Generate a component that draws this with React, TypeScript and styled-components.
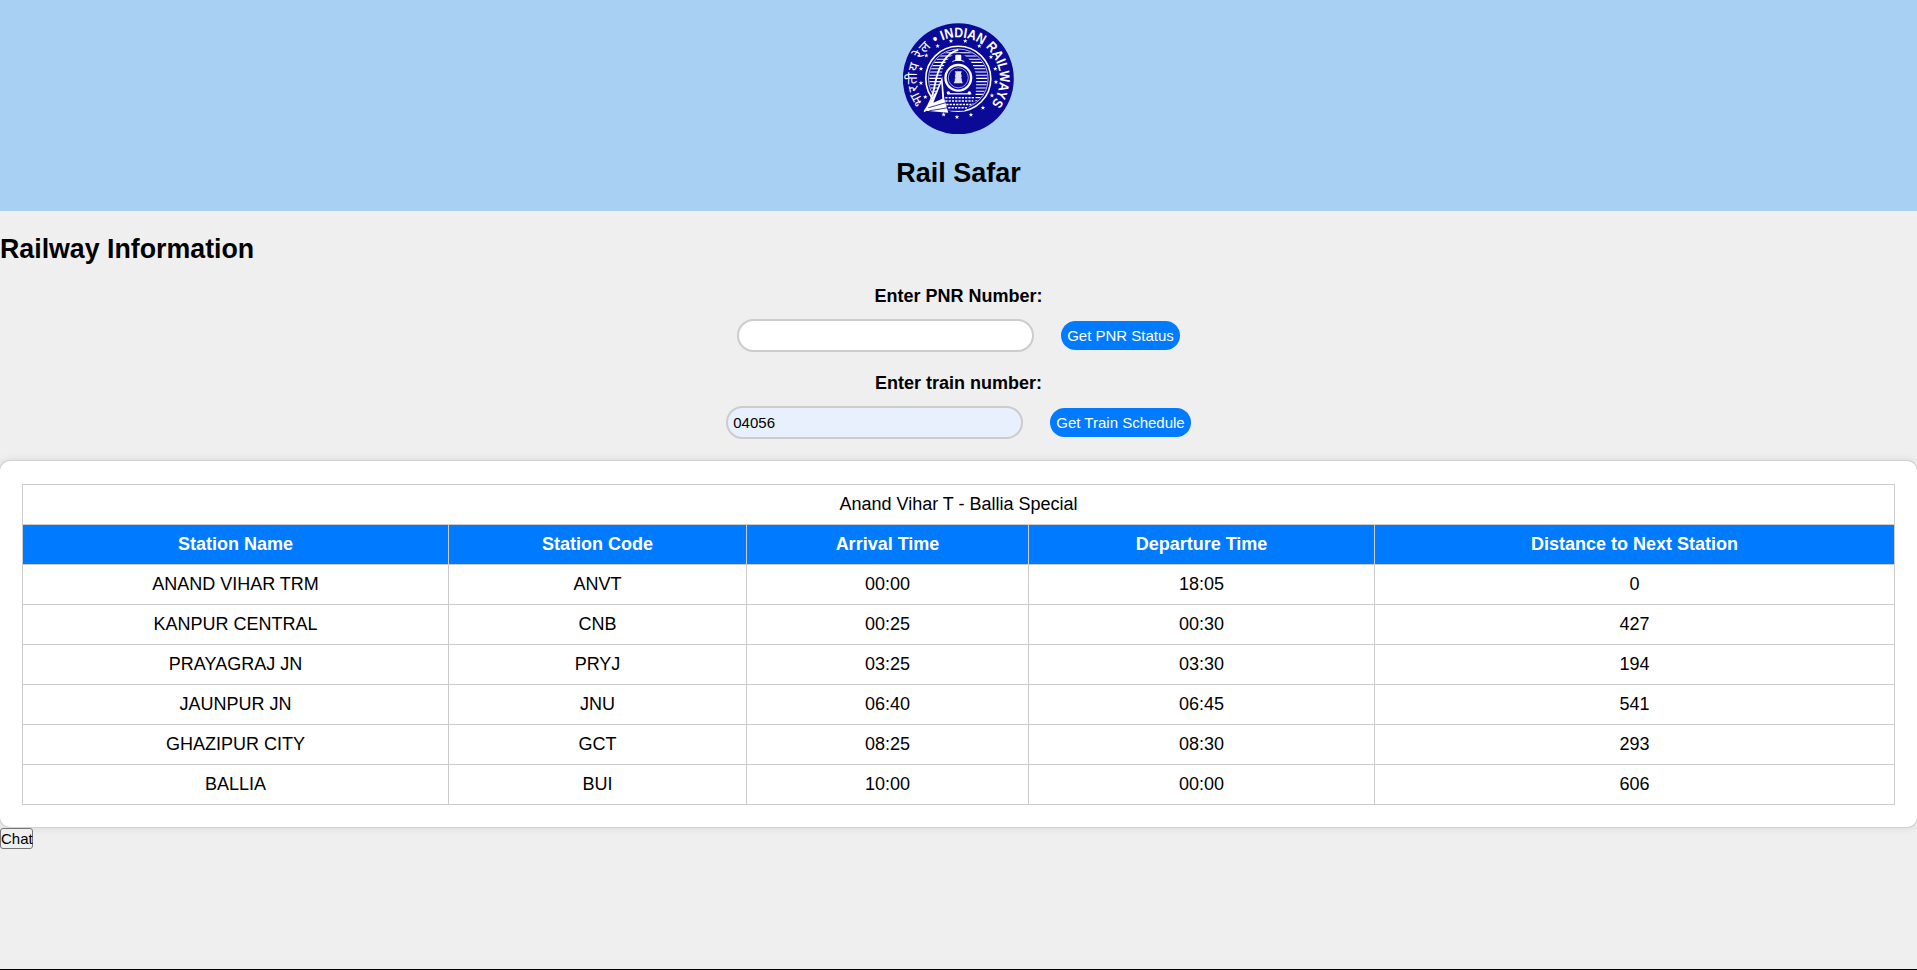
import React, { FC } from "react";
import styled, { createGlobalStyle } from "styled-components";

const GlobalStyle = createGlobalStyle`
  html, body {
    margin: 0;
    padding: 0;
    background: #efefef;
    font-family: "Liberation Sans", Arial, sans-serif;
    color: #000;
  }
`;

const Page = styled.div`
  display: flex;
  flex-direction: column;
  height: 970px;
  overflow: hidden;
`;

const Header = styled.header`
  display: flex;
  flex-direction: column;
  align-items: center;
  height: 211px;
  padding-top: 22px;
  box-sizing: border-box;
  background: #a8d0f2;
`;

const Title = styled.h1`
  margin: 24px 0 0;
  font-size: 27px;
  line-height: 31px;
  font-weight: 700;
`;

const Heading = styled.h2`
  margin: 22px 0 0;
  font-size: 26.75px;
  line-height: 32px;
  font-weight: 700;
`;

const Form = styled.section`
  display: flex;
  flex-direction: column;
  align-items: center;
  margin-top: 21px;
`;

const Label = styled.label`
  font-size: 18px;
  line-height: 21px;
  font-weight: 700;
  margin-bottom: 12px;
`;

const FormRow = styled.div`
  display: flex;
  align-items: center;
  gap: 27px;
  margin-bottom: 21px;
`;

const Input = styled.input<{ $filled?: boolean }>`
  width: 297px;
  height: 33px;
  box-sizing: border-box;
  padding: 0 5px;
  border: 2px solid #ccc;
  border-radius: 20px;
  outline: none;
  background: ${(p) => (p.$filled ? "#e8f0fe" : "#fff")};
  font-family: inherit;
  font-size: 15px;
  color: #000;
`;

const Button = styled.button`
  height: 29px;
  padding: 0 6px;
  border: none;
  border-radius: 15px;
  background: #007bff;
  color: #fff;
  font-family: inherit;
  font-size: 15px;
`;

const Card = styled.section`
  margin-top: 1px;
  padding: 23px 23px 22px 22px;
  background: #fff;
  border-radius: 10px;
  box-shadow: 0 0 0 1px #d2d2d2, 0 0 10px rgba(0, 0, 0, 0.12);
`;

const Table = styled.table`
  width: 100%;
  border-collapse: collapse;
  table-layout: fixed;
  font-size: 18px;
  text-align: center;

  caption {
    height: 40px;
    line-height: 38px;
    box-sizing: border-box;
    border: 1px solid #ccc;
    border-bottom: none;
  }

  th, td {
    height: 40px;
    padding: 0;
    box-sizing: border-box;
    border: 1px solid #ccc;
  }

  th {
    background: #007bff;
    color: #fff;
    font-weight: 700;
  }
`;

const ChatButton = styled.button`
  align-self: flex-start;
  width: 33px;
  height: 21px;
  margin-top: 1px;
  padding: 0;
  border: 1px solid #767676;
  border-radius: 3px;
  background: #efefef;
  color: #000;
  font-family: inherit;
  font-size: 15px;
  line-height: 17px;
`;

const Footer = styled.footer`
  margin-top: auto;
  height: 1px;
  background: #000;
`;

const BLUE = "#0a0a96";

// clockwise arc round the seal centre, angles measured from the top
const arc = (r: number, from: number, to: number) => {
  const pt = (a: number) => {
    const rad = (a * Math.PI) / 180;
    return `${(56 + r * Math.sin(rad)).toFixed(2)} ${(56 - r * Math.cos(rad)).toFixed(2)}`;
  };
  return `M ${pt(from)} A ${r} ${r} 0 ${to - from > 180 ? 1 : 0} 1 ${pt(to)}`;
};

const starPoints = [
  [232, 137], [272, 122], [315, 122], [357, 137], [392, 170], [405, 205], [407, 245], [395, 285],
  [368, 322], [332, 343], [290, 350], [250, 342], [195, 290], [182, 248], [182, 205], [198, 165],
].map(([x, y]) => [(x - 294) / 3 + 56, (y - 235) / 3 + 56]);

const star = (cx: number, cy: number, r: number) =>
  Array.from({ length: 10 }, (_, i) => {
    const rr = i % 2 ? r * 0.4 : r;
    const a = (i * Math.PI) / 5;
    return `${(cx + rr * Math.sin(a)).toFixed(2)},${(cy - rr * Math.cos(a)).toFixed(2)}`;
  }).join(" ");

const stripes = [30, 33.2, 36.4, 39.6, 42.8, 46, 49.2, 52.4, 55.6, 58.8, 62, 65.2, 68.4, 71.6, 74.8, 78, 81.2];

const Logo: FC = () => (
  <svg width="112" height="112" viewBox="0.7 -0.8 112 112">
    <defs>
      <path id="ring-top" d={arc(41.5, -36, 128)} />
      <path id="ring-left" d={arc(41.5, -126, -38)} />
      <clipPath id="ring-inner">
        <circle cx="56" cy="56" r="29" />
      </clipPath>
    </defs>
    <circle cx="56" cy="56" r="55.5" fill={BLUE} />
    <text fontFamily="'Liberation Sans', sans-serif" fontSize="14" fontWeight="700" fill="#fff">
      <textPath href="#ring-top" startOffset="2" textLength="116" lengthAdjust="spacingAndGlyphs">
        • INDIAN RAILWAYS
      </textPath>
    </text>
    <text fontFamily="'Noto Sans', 'DejaVu Sans', sans-serif" fontSize="14" fill="#fff">
      <textPath href="#ring-left" textLength="62">
        भारतीय रेल
      </textPath>
    </text>
    {starPoints.map(([x, y]) => (
      <polygon key={`${x}-${y}`} points={star(x, y, 2.4)} fill="#fff" />
    ))}
    <circle cx="56" cy="56" r="32.5" fill={BLUE} stroke="#fff" strokeWidth="1.6" />
    <circle cx="56" cy="56" r="29.8" fill="none" stroke="#fff" strokeWidth="0.7" />
    <g clipPath="url(#ring-inner)" stroke="#fff" strokeWidth="1.1">
      {stripes.map((y) => (
        <path key={y} d={`M26 ${y}H86`} />
      ))}
    </g>
    {/* locomotive body and dome */}
    <path d="M41 88L39 58C39 40 48 32 56 30C65 32 74 42 74 58L73 78L62 88Z" fill={BLUE} />
    <path d="M56 27C44 30 36 44 33 60C31 72 27 82 22 89" fill="none" stroke="#fff" strokeWidth="1.8" />
    <rect x="53" y="32" width="6" height="6" rx="1" fill="#fff" />
    <path d="M50 39C52 37 60 37 62 39" fill="none" stroke="#fff" strokeWidth="1" />
    {/* boiler with the state emblem */}
    <circle cx="56" cy="55" r="14" fill="#fff" />
    <circle cx="56" cy="55" r="11.6" fill={BLUE} />
    <circle cx="56" cy="55" r="10" fill="none" stroke="#fff" strokeWidth="0.6" />
    <path d="M52.5 48.5h7l-0.8 2.2l0.8 3l-1 1.8h1v2.5l1 2.5h-9l1-2.5v-2.5h1l-1-1.8l0.8-3z" fill="#dfe3ef" />
    {/* buffer beam and grille */}
    <path d="M45 71H69" stroke="#fff" strokeWidth="1.3" />
    <circle cx="46" cy="70" r="1.6" fill="#fff" />
    <circle cx="67" cy="70" r="1.6" fill="#fff" />
    <g stroke="#fff" strokeWidth="1.5" strokeDasharray="2.2 1.1">
      <path d="M43 75H72" />
      <path d="M43 78.3H71" />
      <path d="M44 81.6H69" />
      <path d="M46 84.9H65" />
    </g>
    {/* cow catcher */}
    <path d="M23 88L34 68L40 54L42 76L46 90Z" fill="#fff" />
    <path d="M31 80L39 60L40 76Z" fill={BLUE} />
    <path d="M26 85L43 80M27 88L45 85" stroke={BLUE} strokeWidth="0.8" />
  </svg>
);

const rows = [
  ["ANAND VIHAR TRM", "ANVT", "00:00", "18:05", "0"],
  ["KANPUR CENTRAL", "CNB", "00:25", "00:30", "427"],
  ["PRAYAGRAJ JN", "PRYJ", "03:25", "03:30", "194"],
  ["JAUNPUR JN", "JNU", "06:40", "06:45", "541"],
  ["GHAZIPUR CITY", "GCT", "08:25", "08:30", "293"],
  ["BALLIA", "BUI", "10:00", "00:00", "606"],
];

const columns = [
  { name: "Station Name", width: 426 },
  { name: "Station Code", width: 298 },
  { name: "Arrival Time", width: 282 },
  { name: "Departure Time", width: 346 },
  { name: "Distance to Next Station", width: 520 },
];

const App: FC = () => (
  <Page>
    <GlobalStyle />
    <Header>
      <Logo />
      <Title>Rail Safar</Title>
    </Header>
    <Heading>Railway Information</Heading>
    <Form>
      <Label>Enter PNR Number:</Label>
      <FormRow>
        <Input />
        <Button>Get PNR Status</Button>
      </FormRow>
      <Label>Enter train number:</Label>
      <FormRow>
        <Input $filled defaultValue="04056" />
        <Button>Get Train Schedule</Button>
      </FormRow>
    </Form>
    <Card>
      <Table>
        <caption>Anand Vihar T - Ballia Special</caption>
        <colgroup>
          {columns.map((c) => (
            <col key={c.name} style={{ width: c.width }} />
          ))}
        </colgroup>
        <thead>
          <tr>
            {columns.map((c) => (
              <th key={c.name}>{c.name}</th>
            ))}
          </tr>
        </thead>
        <tbody>
          {rows.map((row) => (
            <tr key={row[0]}>
              {row.map((cell, i) => (
                <td key={i}>{cell}</td>
              ))}
            </tr>
          ))}
        </tbody>
      </Table>
    </Card>
    <ChatButton>Chat</ChatButton>
    <Footer />
  </Page>
);

export default App;
